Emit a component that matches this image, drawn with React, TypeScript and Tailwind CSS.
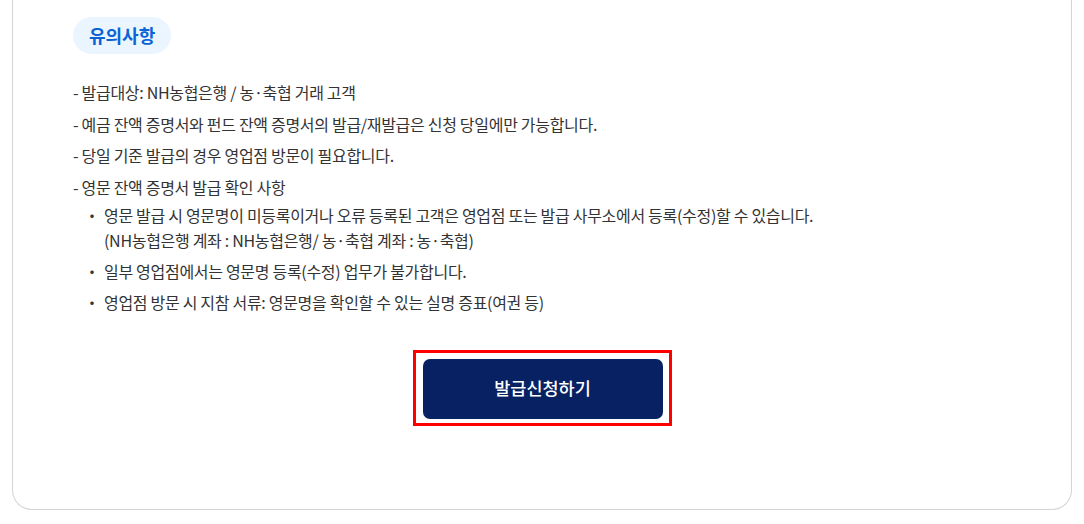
export default function App() {
  const notices = [
    '발급대상: NH농협은행 / 농·축협 거래 고객',
    '예금 잔액 증명서와 펀드 잔액 증명서의 발급/재발급은 신청 당일에만 가능합니다.',
    '당일 기준 발급의 경우 영업점 방문이 필요합니다.',
  ];

  const subNotices = [
    ['영문 발급 시 영문명이 미등록이거나 오류 등록된 고객은 영업점 또는 발급 사무소에서 등록(수정)할 수 있습니다.', '(NH농협은행 계좌 : NH농협은행/ 농·축협 계좌 : 농·축협)'],
    ['일부 영업점에서는 영문명 등록(수정) 업무가 불가합니다.'],
    ['영업점 방문 시 지참 서류: 영문명을 확인할 수 있는 실명 증표(여권 등)'],
  ];

  return (
    <div
      className="bg-white px-3 pb-[14px]"
      style={{ fontFamily: '"Noto Sans CJK KR", "Noto Sans", sans-serif' }}
    >
      <div className="border-x border-b border-[#d4d4d4] rounded-b-[20px] px-[60px] pt-[17px] pb-[83px]">
        <span className="inline-flex items-center h-[37px] px-[16px] rounded-full bg-[#ebf5ff] text-[#0a64d6] text-[18px] font-bold">
          유의사항
        </span>

        <ul className="mt-[26px] text-[16px] leading-[25px] text-[#333333] tracking-[-0.3px]">
          {notices.map((text, i) => (
            <li key={text} className={i === 0 ? '' : 'mt-[6.5px]'}>
              - {text}
            </li>
          ))}
          <li className="mt-[6.5px]">
            - 영문 잔액 증명서 발급 확인 사항
            <ul className="mt-[3px] pl-[11px]">
              {subNotices.map((lines, i) => (
                <li key={lines[0]} className={`flex ${i === 0 ? '' : 'mt-[6px]'}`}>
                  <span className="w-[20px] shrink-0">・</span>
                  <div>
                    {lines.map((line) => (
                      <p key={line}>{line}</p>
                    ))}
                  </div>
                </li>
              ))}
            </ul>
          </li>
        </ul>

        <div className="mt-[35px] flex justify-center">
          <div className="border-[3px] border-[#ff0000] pt-[6px] pb-[4px] pl-[7px] pr-[6px]">
            <button className="w-[240px] h-[60px] rounded-[7px] bg-[#072163] text-white text-[17.5px] font-medium">
              발급신청하기
            </button>
          </div>
        </div>
      </div>
    </div>
  );
}
